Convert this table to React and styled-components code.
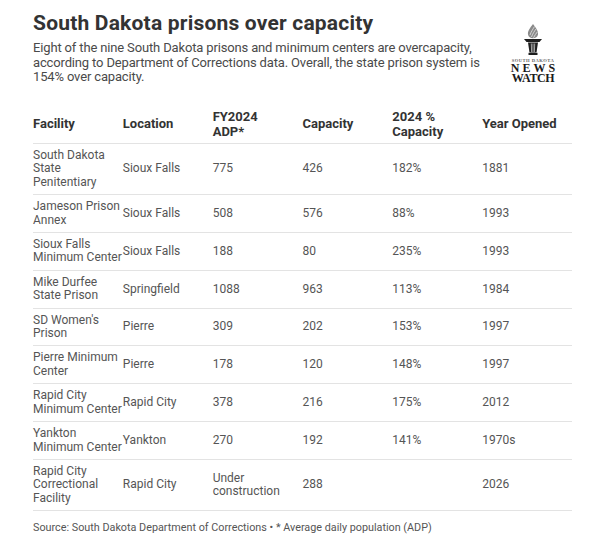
import React from 'react';
import styled, { createGlobalStyle } from 'styled-components';

const GlobalStyle = createGlobalStyle`
    html, body {
        margin: 0;
        padding: 0;
        background: #FFFFFF;
    }
    body {
        font-family: Roboto, "Noto Sans", sans-serif;
        -webkit-font-smoothing: antialiased;
    }
`;

const StyledPage = styled.div`
    width: 610px;
    height: 545px;
    box-sizing: border-box;
    padding: 11px 0 0 33px;
    background: #FFFFFF;
    overflow: hidden;
`;

const StyledHeader = styled.header`
    display: flex;
    flex-direction: row;
    justify-content: space-between;
    width: 523px;
`;

const StyledHeadText = styled.div`
    display: flex;
    flex-direction: column;
`;

const StyledTitle = styled.h1`
    margin: 0;
    font-size: 21px;
    line-height: 24px;
    font-weight: 700;
    letter-spacing: 0.2px;
    color: #333333;
`;

const StyledDek = styled.p`
    margin: 6px 0 0 0;
    font-size: 13px;
    line-height: 14.5px;
    letter-spacing: -0.15px;
    color: #4a4a4a;
    white-space: nowrap;
`;

const StyledLogo = styled.div`
    width: 46px;
    margin-top: 13px;
    display: flex;
    flex-direction: column;
    align-items: center;
    font-family: "Liberation Serif", "DejaVu Serif", serif;
    font-weight: 700;
    color: #1a1a1a;
`;

const StyledLogoState = styled.div`
    font-size: 4.6px;
    line-height: 5px;
    margin-top: 2px;
    letter-spacing: 0.45px;
    color: #666666;
    white-space: nowrap;
`;

const StyledLogoWord = styled.div`
    font-size: 12px;
    line-height: 10px;
    letter-spacing: ${p => p.$spacing};
    margin-right: ${p => p.$spacing === '3px' ? '-3px' : '0'};
    white-space: nowrap;
`;

const StyledTable = styled.div`
    width: 539px;
    margin-top: 20px;
    display: flex;
    flex-direction: column;
`;

const StyledRow = styled.div`
    display: grid;
    grid-template-columns: repeat(6, 1fr);
    align-items: center;
    padding: ${p => p.$head ? '4px 0 4.5px 0' : '5px 0'};
    border-bottom: 1px solid #e3e3e3;
    font-size: ${p => p.$head ? '13px' : '12px'};
    line-height: ${p => p.$head ? '15px' : '13.4px'};
    font-weight: ${p => p.$head ? 700 : 400};
    color: ${p => p.$head ? '#333333' : '#555555'};
`;

const StyledCell = styled.div`
    white-space: pre;
`;

const StyledSource = styled.div`
    margin-top: 10px;
    font-size: 10.8px;
    line-height: 14px;
    color: #555555;
`;

const columns = ['Facility', 'Location', 'FY2024\nADP*', 'Capacity', '2024 %\nCapacity', 'Year Opened'];

const rows = [
    ['South Dakota\nState\nPenitentiary', 'Sioux Falls', '775', '426', '182%', '1881'],
    ['Jameson Prison\nAnnex', 'Sioux Falls', '508', '576', '88%', '1993'],
    ['Sioux Falls\nMinimum Center', 'Sioux Falls', '188', '80', '235%', '1993'],
    ['Mike Durfee\nState Prison', 'Springfield', '1088', '963', '113%', '1984'],
    ["SD Women's\nPrison", 'Pierre', '309', '202', '153%', '1997'],
    ['Pierre Minimum\nCenter', 'Pierre', '178', '120', '148%', '1997'],
    ['Rapid City\nMinimum Center', 'Rapid City', '378', '216', '175%', '2012'],
    ['Yankton\nMinimum Center', 'Yankton', '270', '192', '141%', '1970s'],
    ['Rapid City\nCorrectional\nFacility', 'Rapid City', 'Under\nconstruction', '288', '', '2026'],
];

const Torch = () => (
    <svg width="22" height="32" viewBox="0 0 22 32">
        <path d="M11 0 C14 4 16.5 7 16 10.5 C15.5 13 13.5 14.2 11 14.2 C8.5 14.2 6.5 13 6 10.5 C5.5 7 8 4 11 0 Z" fill="#8a8a8a" />
        <path d="M8 11 C9 8 11 5 12.5 2.5 M9.5 13 C10.5 10 12.5 7 14 5 M11.5 13.8 C12.5 11.5 14 9.5 15.3 8" stroke="#e6e6e6" strokeWidth="0.8" fill="none" />
        <polygon points="2,15 20,15 17.5,18 4.5,18" fill="#1e1e1e" />
        <polygon points="6,18.5 16,18.5 14.5,28.5 7.5,28.5" fill="#1e1e1e" />
        <path d="M9.3 19.5 L9.6 28 M11 19.5 L11 28 M12.7 19.5 L12.4 28" stroke="#ffffff" strokeWidth="0.6" />
        <rect x="6.5" y="28.8" width="9" height="2.2" fill="#1e1e1e" />
    </svg>
);

const App = () => (
    <StyledPage>
        <GlobalStyle />
        <StyledHeader>
            <StyledHeadText>
                <StyledTitle>South Dakota prisons over capacity</StyledTitle>
                <StyledDek>
                    Eight of the nine South Dakota prisons and minimum centers are overcapacity,<br />
                    according to Department of Corrections data. Overall, the state prison system is<br />
                    154% over capacity.
                </StyledDek>
            </StyledHeadText>
            <StyledLogo>
                <Torch />
                <StyledLogoState>SOUTH DAKOTA</StyledLogoState>
                <StyledLogoWord $spacing="3px">NEWS</StyledLogoWord>
                <StyledLogoWord $spacing="-0.4px">WATCH</StyledLogoWord>
            </StyledLogo>
        </StyledHeader>
        <StyledTable>
            <StyledRow $head>
                {columns.map(c => <StyledCell key={c}>{c}</StyledCell>)}
            </StyledRow>
            {rows.map(r => (
                <StyledRow key={r[0]}>
                    {r.map((v, i) => <StyledCell key={i}>{v}</StyledCell>)}
                </StyledRow>
            ))}
        </StyledTable>
        <StyledSource>Source: South Dakota Department of Corrections • * Average daily population (ADP)</StyledSource>
    </StyledPage>
);

export default App;
